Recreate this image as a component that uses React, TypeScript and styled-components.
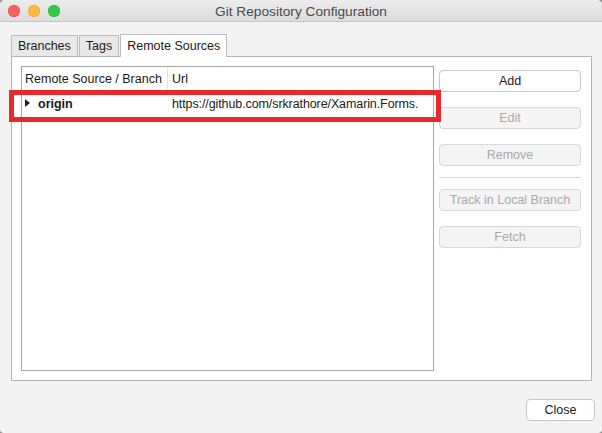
import React from "react"
import styled, { createGlobalStyle } from "styled-components"

const GlobalStyle = createGlobalStyle`
  html, body {
    margin: 0;
    padding: 0;
    background: #8e8e8e;
  }
  body {
    font-family: "Liberation Sans", Arial, sans-serif;
    font-size: 12.5px;
    color: #1a1a1a;
  }
`

const Window = styled.div`
  position: relative;
  width: 602px;
  height: 433px;
  background: #f3f3f3;
  border-radius: 5px 5px 4px 4px;
  overflow: hidden;
  display: flex;
  flex-direction: column;
`

const TitleBar = styled.div`
  height: 21px;
  flex-shrink: 0;
  display: grid;
  grid-template-columns: 1fr auto 1fr;
  align-items: center;
  background: linear-gradient(#ececec, #dcdcdc);
  border-bottom: 1px solid #c4c4c4;
`

const Lights = styled.div`
  display: flex;
  gap: 8px;
  padding-left: 8px;
  padding-top: 1px;
`

const Light = styled.span<{ color: string; edge: string }>`
  width: 12px;
  height: 12px;
  border-radius: 50%;
  background: ${(p) => p.color};
  box-shadow: inset 0 0 0 0.5px ${(p) => p.edge};
`

const Title = styled.div`
  color: #4a4a4a;
  font-size: 13.7px;
  padding-top: 1px;
`

const Body = styled.div`
  display: flex;
  flex-direction: column;
  padding: 12px 10px 0 11px;
`

const TabStrip = styled.div`
  display: flex;
  align-items: flex-end;
  height: 22px;
  gap: 1px;
`

const Tab = styled.div<{ active?: boolean }>`
  position: relative;
  z-index: ${(p) => (p.active ? 1 : 0)};
  box-sizing: border-box;
  height: ${(p) => (p.active ? 23 : 21)}px;
  margin-bottom: ${(p) => (p.active ? -1 : 0)}px;
  padding: 0 6px;
  display: flex;
  align-items: center;
  white-space: nowrap;
  background: ${(p) => (p.active ? "#ffffff" : "#e8e8e8")};
  border: 1px solid #bcbcbc;
  border-bottom: none;
  color: #1a1a1a;
`

const Panel = styled.div`
  box-sizing: border-box;
  height: 325px;
  display: flex;
  gap: 5px;
  padding: 9px 10px 9px 9px;
  background: #ffffff;
  border: 1px solid #b4b4b4;
`

const List = styled.div`
  position: relative;
  box-sizing: border-box;
  width: 413px;
  flex-shrink: 0;
  border: 1px solid #a6a6a6;
  background: #ffffff;
`

const HeaderRow = styled.div`
  display: flex;
  height: 24px;
  background: #ffffff;
`

const HeaderCell = styled.div<{ width?: number }>`
  display: flex;
  align-items: center;
  white-space: nowrap;
  padding-left: ${(p) => (p.width ? 3 : 4)}px;
  ${(p) => (p.width ? `width: ${p.width}px; flex-shrink: 0;` : "flex: 1;")}
  box-sizing: border-box;
  border-right: ${(p) => (p.width ? "1px solid #e4e4e4" : "none")};
  color: #1a1a1a;
`

const Row = styled.div`
  display: flex;
  align-items: center;
  height: 23px;
  margin-top: 1px;
`

const NameCell = styled.div`
  width: 146px;
  flex-shrink: 0;
  display: flex;
  align-items: center;
  padding-left: 3px;
  gap: 8px;
  box-sizing: border-box;
  font-weight: bold;
`

const Disclosure = styled.span`
  width: 0;
  height: 0;
  border-top: 4px solid transparent;
  border-bottom: 4px solid transparent;
  border-left: 5px solid #1e1e1e;
  margin-top: -1px;
`

const UrlCell = styled.div`
  flex: 1;
  padding-left: 4px;
  white-space: nowrap;
  letter-spacing: -0.1px;
`

const Highlight = styled.div`
  position: absolute;
  left: -13px;
  top: 23px;
  width: 432px;
  height: 32px;
  box-sizing: border-box;
  border: 5px solid #e8282b;
  pointer-events: none;
`

const Actions = styled.div`
  width: 142px;
  display: flex;
  flex-direction: column;
  gap: 15px;
  padding-top: 4px;
`

const Button = styled.button<{ disabled?: boolean }>`
  box-sizing: border-box;
  height: 22px;
  padding: 0;
  font-family: inherit;
  font-size: 12.5px;
  border-radius: 4px;
  border: 1px solid ${(p) => (p.disabled ? "#d8d8d8" : "#c6c6c6")};
  background: ${(p) => (p.disabled ? "#f4f4f4" : "#ffffff")};
  color: ${(p) => (p.disabled ? "#a9a9a9" : "#1a1a1a")};
`

const Separator = styled.div`
  height: 1px;
  background: #d6d6d6;
  margin: -4px 0;
`

const Footer = styled.div`
  display: flex;
  justify-content: flex-end;
  padding: 18px 7px 0 0;
`

const CloseButton = styled(Button)`
  width: 69px;
`

export default function App() {
  return (
    <>
      <GlobalStyle />
      <Window>
        <TitleBar>
          <Lights>
            <Light color="#fc605c" edge="#de4a45" />
            <Light color="#fdbc40" edge="#dea034" />
            <Light color="#34c84a" edge="#27aa35" />
          </Lights>
          <Title>Git Repository Configuration</Title>
          <div />
        </TitleBar>
        <Body>
          <TabStrip>
            <Tab>Branches</Tab>
            <Tab>Tags</Tab>
            <Tab active>Remote Sources</Tab>
          </TabStrip>
          <Panel>
            <List>
              <HeaderRow>
                <HeaderCell width={146}>Remote Source / Branch</HeaderCell>
                <HeaderCell>Url</HeaderCell>
              </HeaderRow>
              <Row>
                <NameCell>
                  <Disclosure />
                  origin
                </NameCell>
                <UrlCell>https://github.com/srkrathore/Xamarin.Forms.</UrlCell>
              </Row>
              <Highlight />
            </List>
            <Actions>
              <Button>Add</Button>
              <Button disabled>Edit</Button>
              <Button disabled>Remove</Button>
              <Separator />
              <Button disabled>Track in Local Branch</Button>
              <Button disabled>Fetch</Button>
            </Actions>
          </Panel>
        </Body>
        <Footer>
          <CloseButton>Close</CloseButton>
        </Footer>
      </Window>
    </>
  )
}
